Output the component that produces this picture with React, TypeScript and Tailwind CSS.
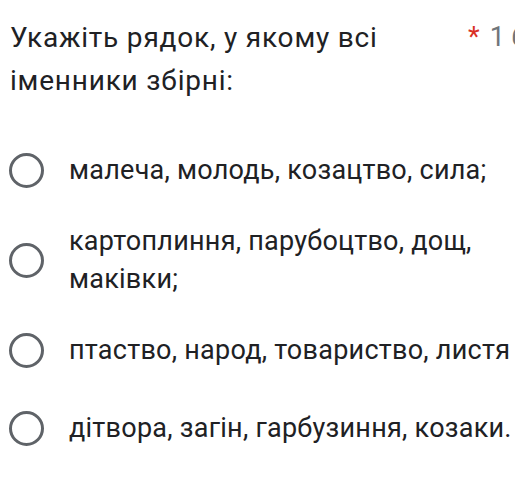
import React from 'react'

// Single-choice question card, cropped view (Google Forms style)

const options: { text: string; gap: string }[] = [
  { text: 'малеча, молодь, козацтво, сила;', gap: 'mt-0' },
  { text: 'картоплиння, парубоцтво, дощ, маківки;', gap: 'mt-[33px]' },
  { text: 'птаство, народ, товариство, листя', gap: 'mt-[33px]' },
  { text: 'дітвора, загін, гарбузиння, козаки.', gap: 'mt-[40px]' },
]

function Radio() {
  return <div className="w-[35px] h-[35px] shrink-0 rounded-full border-[3px] border-[#5f6368]" />
}

export default function App() {
  return (
    <div className="w-[515px] h-[484px] overflow-hidden bg-white text-[#202124] font-['Roboto',sans-serif]">
      <div className="flex pt-[16px] pl-[10px]">
        <div className="w-[420px] shrink-0 text-[28px] leading-[43px] tracking-[0.8px]">
          Укажіть рядок, у якому всі іменники збірні:
        </div>
        <div className="flex shrink-0 whitespace-nowrap pl-[38px] text-[27px] leading-[43px]">
          <span className="text-[#d93025]">*</span>
          <span className="pl-[10px] text-[#70757a]">1 бал</span>
        </div>
      </div>
      <div className="mt-[49px] flex flex-col pl-[9px]">
        {options.map((o, i) => (
          <div key={i} className={`flex items-center ${o.gap}`}>
            <Radio />
            <div className="pl-[25px] w-[478px] shrink-0 text-[27px] leading-[38px] tracking-[0.25px]">{o.text}</div>
          </div>
        ))}
      </div>
    </div>
  )
}
